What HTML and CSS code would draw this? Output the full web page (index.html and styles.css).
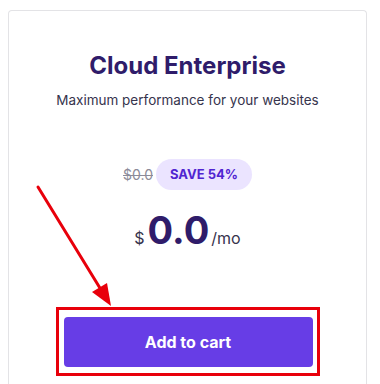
FILE: index.html
```html
<!DOCTYPE html>
<html lang="en">
<head>
  <meta charset="UTF-8">
  <meta name="viewport" content="width=device-width, initial-scale=1.0">
  <title>Cloud Enterprise</title>
  <link rel="stylesheet" href="styles.css">
</head>
<body>

  <div class="card">
    <h2 class="plan-title">Cloud Enterprise</h2>
    <p class="plan-desc">Maximum performance for your websites</p>

    <div class="discount">
      <span class="old-price">$0.0</span>
      <span class="save-badge">SAVE 54%</span>
    </div>

    <div class="price">
      <span class="currency">$</span><span class="amount">0.0</span><span class="period">/mo</span>
    </div>

    <div class="highlight">
      <button class="cart-button">Add to cart</button>
    </div>
  </div>

  <svg class="arrow" width="380" height="384" viewBox="0 0 380 384">
    <line x1="38" y1="187" x2="103" y2="293" stroke="#e8000b" stroke-width="3" stroke-linecap="round"/>
    <polygon points="111,306 92,292 107,283" fill="#e8000b"/>
  </svg>

</body>
</html>
```

FILE: styles.css
```css
body {
  font-family: 'Inter', 'DejaVu Sans', sans-serif;
  background-color: #fff;
  margin: 0;
  height: 384px;
  overflow: hidden;
  position: relative;
}
.card {
  margin: 10px 13px 0 8px;
  height: 374px;
  border: 1px solid #e3e3e6;
  border-bottom: none;
  border-radius: 4px 4px 0 0;
  display: flex;
  flex-direction: column;
  align-items: center;
  padding-top: 40px;
  box-sizing: border-box;
}
.plan-title {
  margin: 0;
  font-size: 24px;
  line-height: 30px;
  font-weight: 700;
  color: #2f1c6a;
}
.plan-desc {
  margin: 9px 0 0;
  font-size: 13.5px;
  line-height: 20px;
  color: #36344d;
}
.discount {
  margin-top: 49px;
  display: flex;
  align-items: center;
  gap: 3px;
}
.old-price {
  font-size: 14px;
  color: #8c8b99;
  text-decoration: line-through;
}
.save-badge {
  background-color: #ebe4ff;
  color: #5025d1;
  font-size: 13px;
  font-weight: 700;
  line-height: 31px;
  padding: 0 14px;
  border-radius: 16px;
}
.price {
  margin-top: 18px;
  display: flex;
  align-items: baseline;
  color: #2f1c6a;
  line-height: 44px;
}
.currency {
  font-size: 16px;
  color: #36344d;
  margin-right: 3px;
}
.amount {
  font-size: 38px;
  font-weight: 700;
}
.period {
  font-size: 16px;
  color: #36344d;
  margin-left: 2px;
}
.highlight {
  margin-top: 47px;
  border: 3px solid #e8000b;
  padding: 7px 4px 6px 5px;
}
.cart-button {
  display: block;
  width: 249px;
  height: 50px;
  border: none;
  border-radius: 4px;
  background-color: #673de6;
  color: #fff;
  font-family: inherit;
  font-size: 16px;
  font-weight: 700;
}
.arrow {
  position: absolute;
  top: 0;
  left: 0;
}
```
